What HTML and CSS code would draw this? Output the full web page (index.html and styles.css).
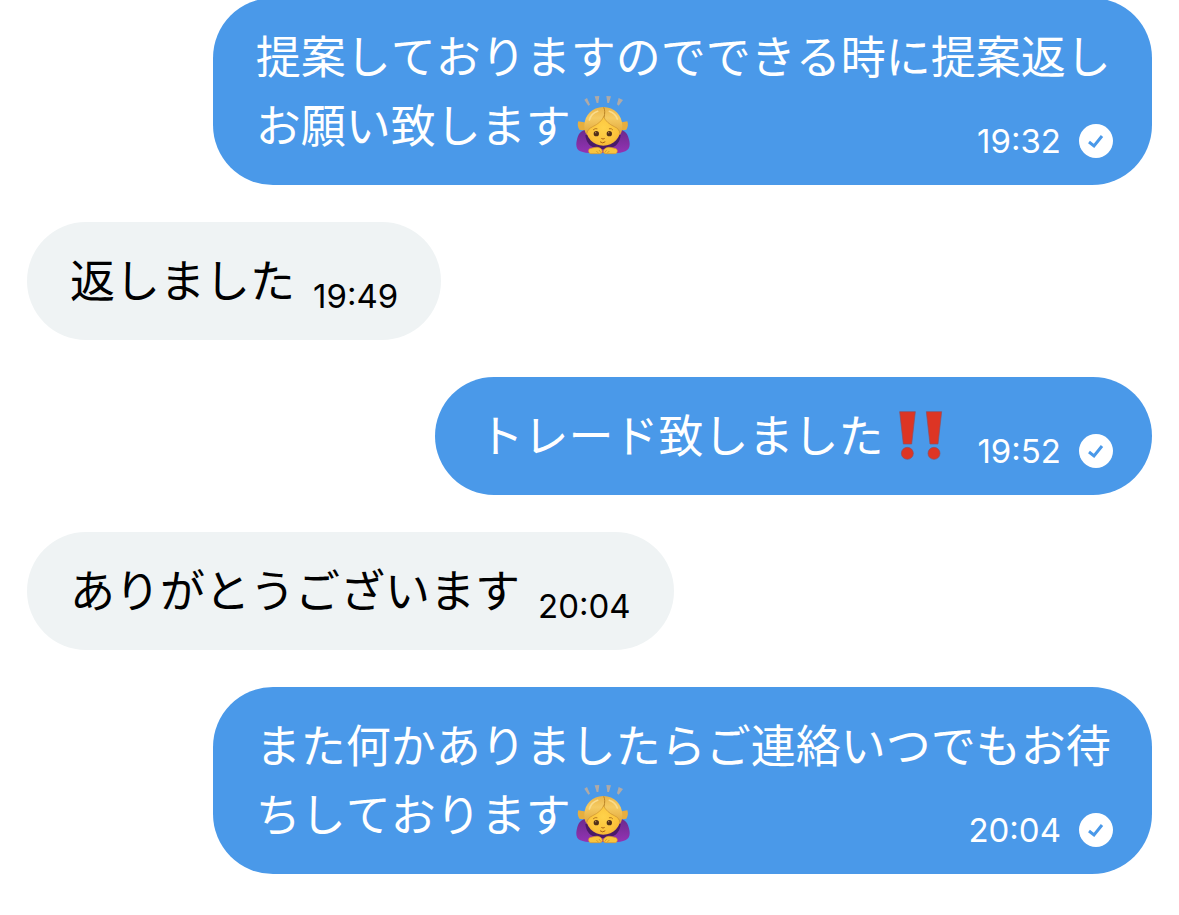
FILE: index.html
```html
<!DOCTYPE html>
<html lang="ja">
<head>
    <meta charset="UTF-8">
    <meta name="viewport" content="width=device-width, initial-scale=1.0">
    <title>メッセージ</title>
    <link rel="stylesheet" href="styles.css">
</head>
<body>
    <!-- shared icons -->
    <svg class="sprite" aria-hidden="true">
        <defs>
            <linearGradient id="hair" x1="0" y1="0" x2="0" y2="1">
                <stop offset="0" stop-color="#e9b348"/>
                <stop offset="0.4" stop-color="#f5cb62"/>
                <stop offset="1" stop-color="#e0a63a"/>
            </linearGradient>
            <radialGradient id="face" cx="0.5" cy="0.5" r="0.6">
                <stop offset="0" stop-color="#ffd24a"/>
                <stop offset="0.7" stop-color="#fbc23a"/>
                <stop offset="1" stop-color="#eda82b"/>
            </radialGradient>
            <linearGradient id="sleeve" x1="0" y1="0" x2="0" y2="1">
                <stop offset="0" stop-color="#6b2a8c"/>
                <stop offset="1" stop-color="#9433b4"/>
            </linearGradient>
        </defs>
        <symbol id="bow" viewBox="48 30 162 180">
            <path fill="#b0aaa6" d="M73 44l8-5 9 20-5 3zM104 34l14-1-3 21h-5zM139 33l14 1-6 20h-5zM176 39l13 6-13 17-5-4z"/>
            <path fill="#e6ae3e" d="M55 109l25 4v24l-22-3c-5-8-6-17-3-25zM202 109l-25 4v24l22-3c5-8 6-17 3-25z"/>
            <path fill="url(#sleeve)" d="M84 134c-22 0-30 12-34 34-3 16 0 26 11 31 12 5 28 6 48 5h40c20 1 36 0 47-5 12-5 15-16 12-31-4-22-12-34-34-34z"/>
            <path fill="#4a1a68" d="M76 150c2 20 12 32 24 37l29 6 29-6c12-5 22-17 24-37z"/>
            <path fill="url(#face)" d="M76 122c0-27 20-46 54-46s54 19 54 46c0 35-24 60-54 60s-54-25-54-60z"/>
            <path fill="url(#hair)" d="M130 66c-34 1-56 24-57 56 0 12 2 20 7 27 2-12 6-18 17-24 17-8 29-18 34-31 5 14 17 24 33 31 11 6 14 12 16 24 5-7 7-15 7-27-1-32-23-55-57-56z"/>
            <path fill="none" stroke="#c98f30" stroke-width="2" d="M80 146c3-11 8-16 18-21 17-8 28-18 33-30 5 13 17 23 32 30 11 5 15 10 17 21"/>
            <path fill="none" stroke="#ba8427" stroke-width="3" d="M131 67c4 7 4 18 1 30"/>
            <path fill="none" stroke="#fadc8c" stroke-width="5" stroke-linecap="round" d="M88 105c4-14 13-22 25-26M148 79c12 4 20 11 24 23"/>
            <path fill="none" stroke="#b87920" stroke-width="3" stroke-linecap="round" d="M100 134q5-5 11-3M148 131q7-2 10 3"/>
            <ellipse cx="109" cy="146" rx="8" ry="8" fill="#51301a"/>
            <ellipse cx="148" cy="146" rx="8" ry="8" fill="#51301a"/>
            <circle cx="107" cy="143" r="2" fill="#c18b55"/>
            <circle cx="146" cy="143" r="2" fill="#c18b55"/>
            <path fill="none" stroke="#a85f16" stroke-width="3" stroke-linecap="round" d="M125 161q4 3 8 0M121 171q7 6 14 0"/>
            <path fill="#f9c53e" stroke="#dd9929" stroke-width="2" d="M89 191c10-2 17-5 24-4 8 1 13 6 14 12 0 5-3 7-8 7H92c-7-2-8-11-3-15zM168 191c-10-2-16-5-23-4-8 1-14 6-15 12 0 5 3 7 8 7h28c7-2 8-11 2-15z"/>
            <path fill="none" stroke="#c98725" stroke-width="2" d="M109 198l7 7M117 195l6 8M148 198l-7 7M140 195l-6 8"/>
        </symbol>
        <symbol id="bangs" viewBox="40 32 162 180">
            <g fill="#dd3524" stroke="#8c4f61" stroke-width="2">
                <path d="M57 52h47l-11 97H68zM137 52h46l-11 97h-24z"/>
                <circle cx="80" cy="177" r="18"/>
                <circle cx="160" cy="177" r="18"/>
            </g>
        </symbol>
        <symbol id="check" viewBox="0 0 34 34">
            <circle cx="17" cy="17" r="17" fill="#fff"/>
            <path fill="none" stroke="#4a99e9" stroke-width="3" d="M10 18l5 4 8-10"/>
        </symbol>
    </svg>

    <main class="chat">
        <div class="message sent">
            <span class="text">提案しておりますのでできる時に提案返しお願い致します<svg class="emoji" role="img" aria-label="おじぎ"><use href="#bow"/></svg></span>
            <div class="meta">
                <time>19:32</time>
                <svg class="check" role="img" aria-label="既読"><use href="#check"/></svg>
            </div>
        </div>

        <div class="message received">
            <span class="text">返しました</span>
            <div class="meta"><time>19:49</time></div>
        </div>

        <div class="message sent">
            <span class="text">トレード致しました<svg class="emoji wide" role="img" aria-label="!!"><use href="#bangs"/></svg></span>
            <div class="meta">
                <time>19:52</time>
                <svg class="check" role="img" aria-label="既読"><use href="#check"/></svg>
            </div>
        </div>

        <div class="message received">
            <span class="text">ありがとうございます</span>
            <div class="meta"><time>20:04</time></div>
        </div>

        <div class="message sent">
            <span class="text">また何かありましたらご連絡いつでもお待ちしております<svg class="emoji" role="img" aria-label="おじぎ"><use href="#bow"/></svg></span>
            <div class="meta">
                <time>20:04</time>
                <svg class="check" role="img" aria-label="既読"><use href="#check"/></svg>
            </div>
        </div>
    </main>
</body>
</html>
```
FILE: styles.css
```css
* {
    box-sizing: border-box;
}

body {
    margin: 0;
    background-color: #fff;
    font-family: "Noto Sans CJK JP", sans-serif;
}

.sprite {
    display: block;
    width: 0;
    height: 0;
}

/* newest message stays at the bottom, older ones run off the top */
.chat {
    display: flex;
    flex-direction: column;
    justify-content: flex-end;
    gap: 37px;
    height: 100vh;
    padding: 0 27px 41px;
    overflow: hidden;
}

.message {
    flex-shrink: 0;
    max-width: 83.5%;
    padding: 22px 43px 27px;
    border-radius: 60px;
    font-size: 45px;
    font-kerning: none;
    line-height: 69px;
}

.sent {
    align-self: flex-end;
    padding-right: 39px;
    background-color: #4a99e9;
    color: #fff;
}

.received {
    align-self: flex-start;
    background-color: #eff3f4;
    color: #000;
}

/* the time floats in the free end of the last line */
.meta {
    float: right;
    display: flex;
    align-items: center;
    gap: 18px;
    margin: 35px 0 0 18px;
    font-family: Inter, sans-serif;
    font-size: 33px;
    line-height: 34px;
}

.emoji {
    width: 54px;
    height: 60px;
    margin: 6px 5px 3px;
    vertical-align: top;
}

.wide {
    margin-right: 11px;
    margin-left: 11px;
}

.check {
    width: 34px;
    height: 34px;
}
```
